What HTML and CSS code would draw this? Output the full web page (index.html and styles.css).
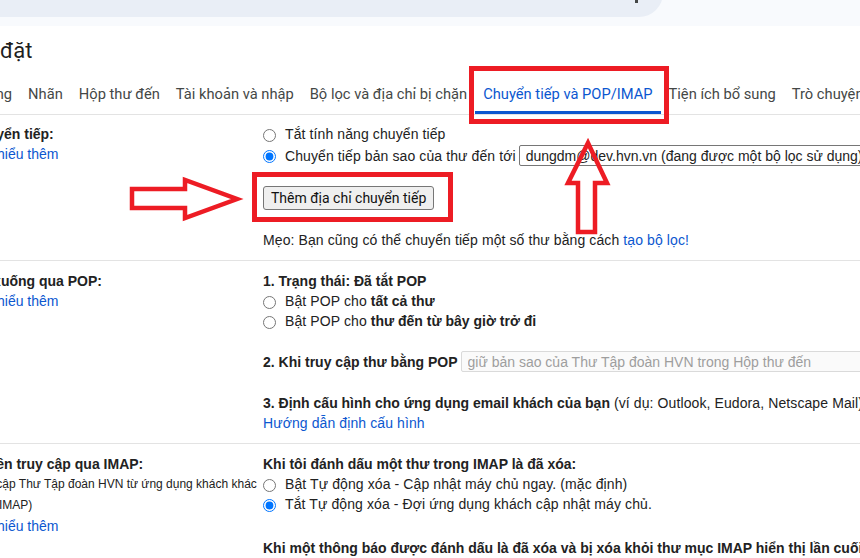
FILE: index.html
```html
<!DOCTYPE html>
<html lang="vi">
<head>
<meta charset="utf-8">
<title>Cài đặt - Chuyển tiếp và POP/IMAP</title>
<link rel="stylesheet" href="styles.css">
</head>
<body>
<div class="top">
  <div class="search"><span class="search-mark"></span></div>
</div>
<div class="panel">
  <h1 class="title">Cài đặt</h1>
  <nav class="tabs">
    <span class="tab">Chung</span>
    <span class="tab">Nhãn</span>
    <span class="tab">Hộp thư đến</span>
    <span class="tab">Tài khoản và nhập</span>
    <span class="tab">Bộ lọc và địa chỉ bị chặn</span>
    <span class="tab active">Chuyển tiếp và POP/IMAP</span>
    <span class="tab">Tiện ích bổ sung</span>
    <span class="tab">Trò chuyện và Meet</span>
  </nav>
  <div class="rows">
    <section class="row row-first">
      <div class="label">
        <div class="lbl">Chuyển tiếp:</div>
        <a class="link">Tìm hiểu thêm</a>
      </div>
      <div class="body">
        <label class="opt"><input type="radio" name="fwd">Tắt tính năng chuyển tiếp</label>
        <label class="opt opt-sel"><input type="radio" name="fwd" checked>Chuyển tiếp bản sao của thư đến tới<select class="sel sel-fwd"><option>dungdm@dev.hvn.vn (đang được một bộ lọc sử dụng)</option></select></label>
        <button class="btn" type="button">Thêm địa chỉ chuyển tiếp</button>
        <div class="tip">Mẹo: Bạn cũng có thể chuyển tiếp một số thư bằng cách&nbsp;<a class="link">tạo bộ lọc!</a></div>
      </div>
    </section>
    <section class="row">
      <div class="label">
        <div class="lbl">Tải xuống qua POP:</div>
        <a class="link">Tìm hiểu thêm</a>
      </div>
      <div class="body">
        <div class="line"><b>1. Trạng thái: Đã tắt POP</b></div>
        <label class="opt"><input type="radio" name="pop">Bật POP cho&nbsp;<b>tất cả thư</b></label>
        <label class="opt"><input type="radio" name="pop">Bật POP cho&nbsp;<b>thư đến từ bây giờ trở đi</b></label>
        <div class="line line-sel gap20"><b>2. Khi truy cập thư bằng POP</b><select class="sel sel-off" disabled><option>giữ bản sao của Thư Tập đoàn HVN trong Hộp thư đến</option></select></div>
        <div class="line gap21"><b>3. Định cấu hình cho ứng dụng email khách của bạn</b>&nbsp;(ví dụ: Outlook, Eudora, Netscape Mail)</div>
        <div class="line"><a class="link">Hướng dẫn định cấu hình</a></div>
      </div>
    </section>
    <section class="row row-last">
      <div class="label">
        <div class="lbl">Quyền truy cập qua IMAP:</div>
        <div class="small">(truy cập Thư Tập đoàn HVN từ ứng dụng khách khác<br>bằng IMAP)</div>
        <a class="link">Tìm hiểu thêm</a>
      </div>
      <div class="body">
        <div class="line"><b>Khi tôi đánh dấu một thư trong IMAP là đã xóa:</b></div>
        <label class="opt"><input type="radio" name="imap">Bật Tự động xóa - Cập nhật máy chủ ngay. (mặc định)</label>
        <label class="opt"><input type="radio" name="imap" checked>Tắt Tự động xóa - Đợi ứng dụng khách cập nhật máy chủ.</label>
        <div class="line gap24"><b>Khi một thông báo được đánh dấu là đã xóa và bị xóa khỏi thư mục IMAP hiển thị lần cuối:</b></div>
      </div>
    </section>
  </div>
</div>
<svg class="marks" width="860" height="558" viewBox="0 0 860 558" aria-hidden="true">
  <g fill="none" stroke="#ed1c24" stroke-linejoin="miter">
    <rect x="471.5" y="68.5" width="195" height="53" stroke-width="5"/>
    <rect x="254.5" y="174.5" width="196" height="45" stroke-width="5"/>
    <polygon points="588,143 607,183 595,183 595,232 578,232 578,183 568,183" stroke-width="4.5"/>
    <polygon points="132,189 185,189 185,180 237,199 185,218 185,208 132,208" stroke-width="4.5"/>
  </g>
</svg>
</body>
</html>
```

FILE: styles.css
```css
html, body {
  margin: 0;
  padding: 0;
}
body {
  width: 860px;
  height: 558px;
  overflow: hidden;
  position: relative;
  background: #f8fafd;
  font-family: "Liberation Sans", Arial, sans-serif;
  font-size: 14px;
  line-height: 20px;
  color: #222;
}
.top {
  height: 26px;
  display: flex;
}
.search {
  flex: none;
  margin-top: -31px;
  margin-left: -37px;
  width: 700px;
  height: 48px;
  background: #e9eef6;
  border-radius: 24px;
  display: flex;
  justify-content: flex-end;
  align-items: flex-end;
}
.search-mark {
  width: 3px;
  height: 3px;
  background: #444746;
  margin: 0 25px 14px 0;
}
.panel {
  background: #fff;
  height: 532px;
}
.title {
  margin: 0 0 0 -37px;
  padding: 11px 0 9px;
  font-family: Roboto, "Liberation Sans", sans-serif;
  font-size: 22px;
  line-height: 28px;
  font-weight: 400;
  color: #1f1f1f;
  white-space: nowrap;
}
.tabs {
  display: flex;
  height: 40px;
  margin-left: -38px;
  border-bottom: 1px solid #e3e3e3;
  white-space: nowrap;
}
.tab {
  flex: none;
  display: flex;
  align-items: center;
  padding: 0 8px;
  font-family: Roboto, "Liberation Sans", sans-serif;
  font-size: 14.7px;
  color: #444746;
}
.tab.active {
  color: #0b57d0;
  box-shadow: inset 0 -3px 0 #0b57d0;
}
.rows {
  margin-left: -31px;
}
.row {
  display: flex;
  padding: 10px 0;
  border-bottom: 1px solid #e3e3e3;
}
.row-first {
  padding-top: 9px;
}
.row-last {
  border-bottom: none;
}
.label {
  flex: none;
  width: 294px;
  white-space: nowrap;
}
.lbl {
  font-weight: 700;
}
.link {
  color: #0b57d0;
  text-decoration: none;
  cursor: pointer;
}
.label .link {
  display: block;
}
.small {
  font-size: 12px;
  line-height: 21px;
  color: #222;
}
.body {
  flex: 1;
  white-space: nowrap;
  letter-spacing: 0.1px;
}
b {
  font-weight: 700;
  letter-spacing: 0;
}
.opt, .line, .tip {
  display: flex;
  align-items: center;
  height: 20px;
}
.opt input {
  width: 13px;
  height: 13px;
  margin: 2px 9px 0 0;
  flex: none;
}
.opt-sel {
  margin-top: 1px;
  height: 21px;
}
.line-sel {
  height: 21px;
}
.sel {
  flex: none;
  height: 21px;
  margin-left: 3px;
  padding: 0 2px;
  font-family: "Liberation Sans", Arial, sans-serif;
  font-size: 14px;
  color: #222;
  background: #fff;
  border: 1px solid #767676;
  border-radius: 2px;
}
.sel-fwd {
  width: 380px;
}
.sel-off {
  width: 430px;
  color: #9e9e9e;
  background: #fafafa;
  border-color: #dadada;
  opacity: 1;
}
.btn {
  display: block;
  margin-top: 20px;
  height: 24px;
  padding: 0 7px;
  font-family: Roboto, "Liberation Sans", Arial, sans-serif;
  font-size: 14px;
  color: #111;
  background: #efefef;
  border: 1px solid #767676;
  border-radius: 3px;
  letter-spacing: 0;
}
.tip {
  margin-top: 20px;
}
.gap20 { margin-top: 20px; }
.gap21 { margin-top: 21px; }
.gap24 { margin-top: 24px; }
.marks {
  position: absolute;
  top: 0;
  left: 0;
  pointer-events: none;
}
```
